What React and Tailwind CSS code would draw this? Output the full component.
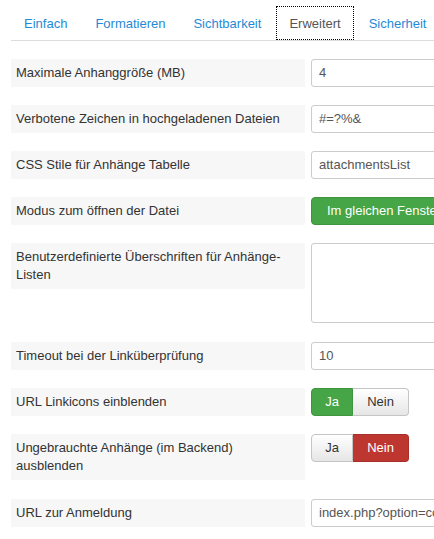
import React from "react";

const TABS = ["Einfach", "Formatieren", "Sichtbarkeit", "Erweitert", "Sicherheit"];

function Label({ children }) {
  return (
    <div className="w-[294px] shrink-0 bg-[#f7f7f7] px-[5px] py-[5px] leading-[18px] text-[#333]">
      {children}
    </div>
  );
}

function TextInput({ value }) {
  return (
    <div className="h-[28px] w-[220px] shrink-0 rounded-[3px] border border-[#ccc] bg-white px-[7px] py-[4px] leading-[18px] text-[#555] whitespace-nowrap overflow-hidden">
      {value}
    </div>
  );
}

// Ja / Nein toggle; "on" is the selected value
function YesNo({ on }) {
  const base = "h-[28px] border leading-[18px] py-[4px] text-center";
  const idle = "bg-gradient-to-b from-white to-[#e6e6e6] border-[#c5c5c5] text-[#333]";
  return (
    <div className="flex shrink-0">
      <div
        className={`${base} w-[42px] rounded-l-[4px] ${
          on === "ja" ? "bg-[#46a546] border-[#3f943f] text-white" : idle
        }`}
      >
        Ja
      </div>
      <div
        className={`${base} w-[56px] rounded-r-[4px] border-l-0 ${
          on === "nein" ? "bg-[#bd362f] border-[#a8302a] text-white" : idle
        }`}
      >
        Nein
      </div>
    </div>
  );
}

function Row({ label, tall, children }) {
  return (
    <div className={`flex items-start gap-[6px] ${tall ? "mb-[19px]" : "mb-[18px]"}`}>
      <Label>{label}</Label>
      {children}
    </div>
  );
}

export default function App() {
  return (
    <div
      className="h-[539px] w-full overflow-hidden bg-white text-[13px]"
      style={{ fontFamily: '"Liberation Sans", Arial, sans-serif' }}
    >
      {/* Tabs */}
      <div className="ml-[11px] pt-[6px] border-b border-[#ddd]">
        <ul className="flex whitespace-nowrap">
          {TABS.map((t) => (
            <li key={t} className="mr-[2px]">
              <span
                className={`block border px-[12px] pt-[8px] pb-[6px] leading-[18px] ${
                  t === "Erweitert"
                    ? "border-dotted border-black text-[#555]"
                    : "border-transparent text-[#1f8ad6]"
                }`}
              >
                {t}
              </span>
            </li>
          ))}
        </ul>
      </div>

      {/* Options */}
      <div className="pl-[11px] pt-[18px]">
        <Row label="Maximale Anhanggröße (MB)">
          <TextInput value="4" />
        </Row>
        <Row label="Verbotene Zeichen in hochgeladenen Dateien">
          <TextInput value="#=?%&" />
        </Row>
        <Row label="CSS Stile für Anhänge Tabelle">
          <TextInput value="attachmentsList" />
        </Row>
        <Row label="Modus zum öffnen der Datei">
          <div className="h-[28px] w-[220px] shrink-0 whitespace-nowrap rounded-[4px] border border-[#3f943f] bg-[#46a546] pl-[15px] py-[4px] leading-[18px] text-white">
            Im gleichen Fenster
          </div>
        </Row>
        <Row
          tall
          label={
            <>
              Benutzerdefinierte Überschriften für Anhänge-
              <br />
              Listen
            </>
          }
        >
          <div className="h-[80px] w-[220px] shrink-0 rounded-[3px] border border-[#ccc] bg-white" />
        </Row>
        <Row label="Timeout bei der Linküberprüfung">
          <TextInput value="10" />
        </Row>
        <Row label="URL Linkicons einblenden">
          <YesNo on="ja" />
        </Row>
        <Row
          tall
          label={
            <>
              Ungebrauchte Anhänge (im Backend)
              <br />
              ausblenden
            </>
          }
        >
          <YesNo on="nein" />
        </Row>
        <Row label="URL zur Anmeldung">
          <TextInput value="index.php?option=com_users&view=login" />
        </Row>
      </div>
    </div>
  );
}
